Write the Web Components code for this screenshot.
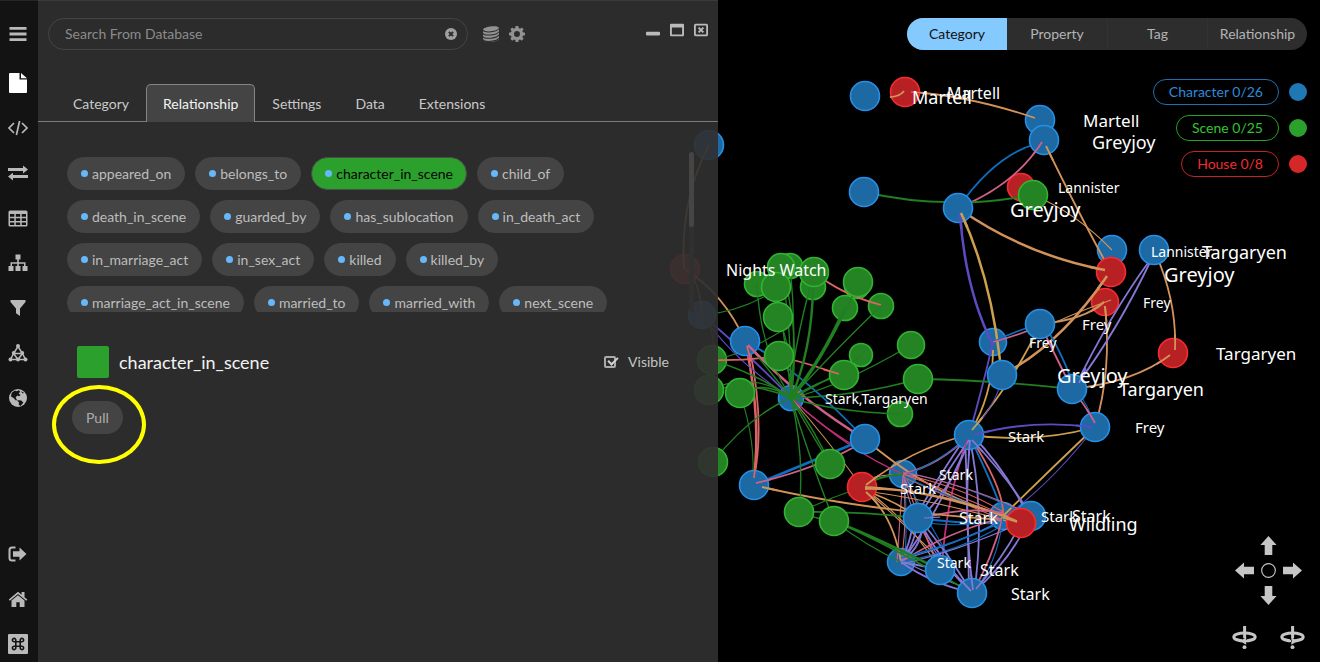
<!DOCTYPE html>
<html lang="en">
<head>
<meta charset="utf-8">
<title>Graph explorer</title>
<style>
html,body{margin:0;background:#000}
body{font:14px/20px Lato,"Noto Sans",sans-serif;color:#c4c4c4}
</style>
</head>
<body>
<graph-app></graph-app>
<script>
function define(name, css, html, setup) {
  const t = document.createElement('template');
  t.innerHTML = '<style>*{box-sizing:border-box}button{font:inherit;color:inherit;background:none;border:0;padding:0;margin:0;cursor:pointer}' + css + '</style>' + html;
  customElements.define(name, class extends HTMLElement {
    constructor() {
      super();
      this.attachShadow({mode: 'open'}).appendChild(t.content.cloneNode(true));
    }
    connectedCallback() { if (setup) setup(this, this.shadowRoot); }
  });
}

/* ---------- icons, all on a 20 x 20 grid ---------- */
const turn = d => `<ellipse cx="10" cy="9.500" rx="9.3" ry="3.5" fill="none" stroke="currentColor" stroke-width="2.6"/><path d="M8 11h4v4H8z" fill="#000"/><path d="M8.800 0h2.600v10.500H8.800z"/><path d="${d}"/><circle cx="10" cy="18.4" r="1.7"/>`;
const icons = {
  menu: '<path d="M1.500 3h17v2.800h-17zM1.500 8.600h17v2.800h-17zM1.500 14.200h17V17h-17z"/>',
  file: '<path d="M2 0h9.500v6.500H19V19a1 1 0 0 1-1 1H2a1 1 0 0 1-1-1V1a1 1 0 0 1 1-1zM13 0l6 5.200h-6z"/>',
  code: '<path d="M6 5L1 10l5 5M14 5l5 5-5 5M11.600 3L8.400 17" fill="none" stroke="currentColor" stroke-width="1.700"/>',
  swap: '<path d="M0 5h15V2.500L20 6.500l-5 4V8H0zM20 12H5V9.700L0 13.500l5 4V15h15z"/>',
  table: '<path fill-rule="evenodd" d="M2 2.500h16a1.500 1.500 0 0 1 1.500 1.500v13a1.500 1.500 0 0 1-1.500 1.500H2A1.500 1.500 0 0 1 .500 17V4A1.500 1.500 0 0 1 2 2.500zM2 6v2.800h4.300V6zm5.800 0v2.800h4.400V6zm5.900 0v2.800H18V6zM2 10.200V13h4.300v-2.800zm5.800 0V13h4.400v-2.800zm5.900 0V13H18v-2.800zM2 14.400V17h4.300v-2.600zm5.800 0V17h4.400v-2.600zm5.900 0V17H18v-2.600z"/>',
  tree: '<path d="M7.500 1.500h5v5h-1.700v2.700h6.700V13H19.500v5h-5v-5h1.500v-2.300h-5.200V13h1.700v5h-5v-5h1.700v-2.300H4V13h1.500v5h-5v-5h2V9.200h6.700V6.500H7.500z"/>',
  filter: '<path d="M2.500 2h15v2L12 10.500V18l-4-2.800v-4.700L2.500 4z"/>',
  network: '<path d="M10 3.500L5.500 10.500 2.500 16.500H17.500L14.500 10.500zM5.500 10.500h9M5.500 10.500L10 16.500l4.500-6" fill="none" stroke="currentColor" stroke-width="1.500"/><circle cx="10" cy="3" r="2"/><circle cx="5.700" cy="10" r="1.900"/><circle cx="14.300" cy="10" r="1.900"/><circle cx="2.500" cy="16.500" r="2"/><circle cx="10" cy="16.500" r="1.900"/><circle cx="17.500" cy="16.500" r="2"/>',
  globe: '<circle cx="10" cy="10" r="9"/><path fill="#131313" d="M4 4.500l3-2 1.500.8 2.200-1 1.600 1.400-1.700 1.800 2 1.500-1.500 1.200-2-.6-1.500 2.200 1.500 2.300-1.200.5L5.500 10 3 8.500 3.400 6zM13 3.200l3 1.600-1.500.8zM8.800 12l4.400.6 2.200 1.800-1.600 2-1.300 1.600-1.800-1.500.3-2z"/>',
  exit: '<path d="M7.500 3.500H4A2.500 2.500 0 0 0 1.500 6v8A2.500 2.500 0 0 0 4 16.500h3.500" fill="none" stroke="currentColor" stroke-width="2"/><path d="M5 7.300h6.500V3.500L18.500 10l-7 6.500v-3.800H5z"/>',
  home: '<path d="M.800 10.600L10 2.700l3.600 3V3h2.900v5.200l2.800 2.400-1 1.200L10 4.900l-8.200 6.900z"/><path d="M3.500 11.600L10 6.200l6.500 5.400V18h-4.800v-4.800H8.300V18H3.500z"/>',
  command: '<rect width="20" height="20" rx="1"/><path d="M7.800 7.800h4.400v4.400h-4.400zM7.800 7.800V6.200a1.700 1.700 0 1 0-1.700 1.600h1.700zM12.200 7.800V6.200a1.700 1.700 0 1 1 1.700 1.600h-1.700zM7.800 12.200v1.600a1.700 1.700 0 1 1-1.700-1.600h1.700zM12.200 12.200v1.600a1.700 1.700 0 1 0 1.700-1.600h-1.700z" fill="none" stroke="#131313" stroke-width="1.600"/>',
  clear: '<circle cx="10" cy="10" r="10"/><path d="M6.500 6.500l7 7M13.500 6.500l-7 7" stroke="#2c2c2c" stroke-width="3.400"/>',
  database: '<path d="M0 4.500C0 .500 20-1.500 20 2.500v13.500c0 4.500-20 5.500-20 1z"/><path d="M0 5c2 4 18 2.500 20-2M0 9c2 4 18 2.500 20-2M0 13c2 4 18 2.500 20-2M0 17c2 4 18 2.500 20-2" fill="none" stroke="#2c2c2c" stroke-width="1.300"/>',
  gear: '<path fill-rule="evenodd" d="M8.300 0h3.400l.5 2.600 1.600.7L16 1.800 18.300 4.100 16.700 6.300l.7 1.600 2.600.5v3.300l-2.600.5-.7 1.600 1.600 2.200-2.400 2.400-2.100-1.600-1.600.7-.5 2.500H8.300l-.5-2.500-1.600-.7L4 18.400 1.700 16l1.500-2.200-.7-1.600-2.500-.5V8.400l2.500-.5.7-1.600-1.500-2.200L4 1.800l2.200 1.500 1.600-.7zM10 6.300a3.700 3.700 0 1 0 0 7.400 3.700 3.700 0 0 0 0-7.400z"/>',
  minimize: '<rect y="12.500" width="20" height="5.500" rx="1.500"/>',
  maximize: '<path fill-rule="evenodd" d="M1.500 1h17A1.500 1.500 0 0 1 20 2.500v15a1.500 1.500 0 0 1-1.500 1.500h-17A1.500 1.500 0 0 1 0 17.500v-15A1.500 1.500 0 0 1 1.500 1zm1.200 5.500v9.800h14.600V6.500z"/>',
  close: '<rect x="1.300" y="2.300" width="17.400" height="15.400" rx="1" fill="none" stroke="currentColor" stroke-width="2.600"/><path d="M6.600 6.600l6.800 6.800M13.400 6.600l-6.800 6.800" stroke="currentColor" stroke-width="2.800"/>',
  up: '<path d="M10 0l8.500 9.500h-4.500V20H6V9.500H1.500z"/>',
  down: '<path d="M10 20l8.500-9.500h-4.500V0H6v10.500H1.500z"/>',
  left: '<path d="M0 10l9.500 8.500v-4.500H20V6H9.500V1.500z"/>',
  right: '<path d="M20 10l-9.500 8.500v-4.500H0V6h10.500V1.500z"/>',
  center: '<circle cx="10" cy="10" r="7.200" fill="none" stroke="currentColor" stroke-width="1.200"/>',
  turnleft: turn('M6 13l5.500-3.300v6.600zM11 12.200h3v1.800h-3z'),
  turnright: turn('M14.500 13L9 9.700v6.600zM6.500 12.200h3v1.800h-3z')
};
define('ui-icon', ':host{display:block;width:var(--size,20px);height:var(--size,20px)}svg{display:block;width:100%;height:100%;fill:currentColor;overflow:visible}',
  '<svg viewBox="0 0 20 20" aria-hidden="true"></svg>',
  (el, root) => { root.querySelector('svg').innerHTML = icons[el.getAttribute('name')]; });

/* ---------- side rail ---------- */
const railButton = (n, l) => `<button aria-label="${l}" class="${n}"><ui-icon name="${n}"></ui-icon></button>`;
define('icon-rail', `
:host{display:block;background:#131313;color:#b9b9b9;border-top:1px solid #262626}
nav{display:flex;flex-direction:column;gap:9px;height:100%;padding-top:15px}
button{display:grid;place-items:center;height:36px;width:36px}
.menu{margin-bottom:4px}.file{color:#fff}.exit{margin-top:auto}`,
  '<nav>' + [['menu','Menu'],['file','Document'],['code','Code'],['swap','Exchange'],['table','Table'],['tree','Hierarchy'],['filter','Filter'],['network','Network'],['globe','World'],['exit','Sign out'],['home','Home'],['command','Shortcuts']].map(a => railButton(...a)).join('') + '</nav>');

/* ---------- search row ---------- */
define('search-row', `
:host{display:flex;align-items:center;padding:0 10px}
.box{display:flex;align-items:center;flex:0 1 420px;height:32px;border:1px solid #444;border-radius:16px;padding:0 10px 0 16px}
input{flex:1;min-width:0;background:none;border:0;padding:0;outline:0;font:inherit;color:#ccc}
input::placeholder{color:#8b8b8b}
.box button{--size:12px;color:#a0a0a0}
.tools{display:flex;gap:10px;margin-left:15px;color:#929292;--size:16px}
.win{display:flex;gap:10px;margin-left:auto;margin-bottom:8px;color:#bababa;--size:14px}`,
  `<div class="box"><input type="text" placeholder="Search From Database" aria-label="Search From Database"><button aria-label="Clear"><ui-icon name="clear"></ui-icon></button></div>
<div class="tools"><button aria-label="Database"><ui-icon name="database"></ui-icon></button><button aria-label="Options"><ui-icon name="gear"></ui-icon></button></div>
<div class="win"><button aria-label="Minimize"><ui-icon name="minimize"></ui-icon></button><button aria-label="Maximize"><ui-icon name="maximize"></ui-icon></button><button aria-label="Close"><ui-icon name="close"></ui-icon></button></div>`);

/* ---------- tabs ---------- */
define('panel-tabs', `
:host{display:flex;padding:0 18px;background:linear-gradient(#7b7b7b,#7b7b7b) bottom/100% 1px no-repeat}
`, '<slot></slot>');
define('panel-tab', `
:host{display:block}
button{height:38px;padding:1px 16px 0;border:1px solid transparent;border-bottom:0;border-radius:5px 5px 0 0;color:#c9c9c9}
:host([active]) button{background:#444;border-color:#858585;color:#f4f4f4}`,
  '<button role="tab"><slot></slot></button>');

/* ---------- relationship pills ---------- */
define('relation-pill', `
:host{display:block}
button{display:flex;align-items:center;gap:4px;height:33px;padding:0 13px;border:1px solid #444;border-radius:17px;background:#444;color:#bdbdbd}
i{width:7px;height:7px;border-radius:50%;background:#66b8fa}
:host([active]) button{background:#2ca02c;color:#050505;border-color:#4b4b4b}`,
  '<button><i></i><span><slot></slot></span></button>');
define('relation-list', `
:host{display:grid;grid-template-columns:1fr 5px;height:160px;padding:0 24px 0 29px}
.list{display:flex;flex-wrap:wrap;align-content:flex-start;gap:10px;overflow:hidden;padding:5px 9px 0 0}
.track{background:#303030;border-radius:3px}
.thumb{height:75px;border-radius:3px;background:#454545}`,
  '<div class="list"><slot></slot></div><div class="track"><div class="thumb"></div></div>');

/* ---------- details of the chosen relationship ---------- */
define('relation-detail', `
:host{display:block;padding:34px 49px 0 34px}
header{display:flex;align-items:center;gap:10px;padding-left:5px}
.swatch{width:32px;height:32px;border-radius:2px;background:#2ca02c}
h2{margin:0;font:18px/24px Lato,sans-serif;color:#f2f2f2}
label{display:flex;align-items:center;gap:12px;margin-left:auto}
input{appearance:none;margin:0;width:12px;height:12px;position:relative}
input:checked::before{content:"";position:absolute;inset:0;box-sizing:border-box;border:2px solid #aaa;border-radius:2px}
input:checked::after{content:"";position:absolute;left:4px;top:1px;width:8px;height:4px;border:solid #d0d0d0;border-width:0 0 2px 2px;transform:rotate(-45deg)}
.action{position:relative;width:max-content;margin-top:23px}
.action button{height:33px;padding:0 14px;border-radius:17px;background:#444;color:#adadad}
.ring{position:absolute;inset:-16px -23px -30px -20px;border:4px solid #ff0;border-radius:50%;pointer-events:none}`,
  `<header><span class="swatch"></span><h2>character_in_scene</h2><label for="vis"><input type="checkbox" id="vis" checked>Visible</label></header>
<div class="action"><button>Pull</button><span class="ring"></span></div>`);

define('side-panel', `
:host{display:block;background:rgba(48,48,48,.92);border-top:1px solid #3a3a3a;padding-top:17px}
panel-tabs{margin-top:34px;margin-bottom:30px}`,
  `<search-row></search-row>
<panel-tabs>${['Category','Relationship','Settings','Data','Extensions'].map((t, i) => `<panel-tab${i == 1 ? ' active' : ''}>${t}</panel-tab>`).join('')}</panel-tabs>
<relation-list>${['appeared_on','belongs_to','character_in_scene','child_of','death_in_scene','guarded_by','has_sublocation','in_death_act','in_marriage_act','in_sex_act','killed','killed_by','marriage_act_in_scene','married_to','married_with','next_scene'].map((t, i) => `<relation-pill${i == 2 ? ' active' : ''}>${t}</relation-pill>`).join('')}</relation-list>
<relation-detail></relation-detail>`);

/* ---------- controls over the graph ---------- */
define('view-switch', `
:host{display:grid;grid-template-columns:repeat(4,1fr);width:400px;max-width:100%;height:32px;border-radius:16px;overflow:hidden;background:#2d2d2d}
button{color:#b4b4b4}
button+button+button{border-left:1px solid #323232}
.on{background:#85caff;color:#111}`,
  '<button class="on">Category</button><button>Property</button><button>Tag</button><button>Relationship</button>');
define('legend-item', `
:host{display:flex;align-items:center;gap:10px}
button{height:26px;padding:0 15px;border:1px solid var(--line);border-radius:13px;color:var(--tone)}
i{width:18px;height:18px;border-radius:50%;background:var(--dot)}`,
  '<button><slot></slot></button><i></i>');
const padButton = (n, l) => n ? `<button aria-label="${l}"><ui-icon name="${n}"></ui-icon></button>` : '<span></span>';
define('nav-pad', `
:host{display:block;width:72px;color:#c6c6c6}
.pad{display:grid;grid-template-columns:repeat(3,24px);grid-auto-rows:25px;margin-bottom:17px;--size:19px}
.turns{display:flex;justify-content:space-between;--size:23px}
button{display:grid;place-items:center;min-width:24px;min-height:24px}`,
  '<div class="pad">' + [[],['up','Up'],[],['left','Left'],['center','Center'],['right','Right'],[],['down','Down'],[]].map(a => padButton(...a)).join('') + '</div><div class="turns">' + padButton('turnleft','Turn left') + padButton('turnright','Turn right') + '</div>');
define('graph-overlay', `
:host{display:flex;flex-direction:column;align-items:flex-end;padding:18px 13px 13px}
.legend{display:flex;flex-direction:column;align-items:flex-end;gap:10px;margin-top:29px}
nav-pad{margin:auto 2px 0 0}`,
  `<view-switch></view-switch><div class="legend">
<legend-item style="--tone:#2f8bd8;--line:#1f70b0;--dot:#1f77b4">Character 0/26</legend-item>
<legend-item style="--tone:#35c435;--line:#27a027;--dot:#2ca02c">Scene 0/25</legend-item>
<legend-item style="--tone:#ef2d2d;--line:#c42424;--dot:#d62728">House 0/8</legend-item></div><nav-pad></nav-pad>`);

/* ---------- graph ---------- */
const paint = {b: ['#1c69a3','#2590e6'], g: ['#248424','#30b430'], r: ['#b82124','#fa2b30']};
const ink = {o:'#d2935a', y:'#cda04e', g:'#217f22', b:'#0d6fc0', p:'#5d4bc4', l:'#8578d6', k:'#cf6088', m:'#c02f78', s:'#dd6464'};
/* nodes below the edges, then nodes above them: kind, x, y, radius */
const back = `b702,315,14 b791,398,13 b993,342,14 b903,474,14 b1003,516,14 r1021,187,14 g790,266,13 g757,284,13 g813,287,13 g857,286,13 g845,308,13 g861,355,12 g881,306,13 r1105,302,14 g900,414,13 b1112,250,15 b901,562,14 b709,145,15 r685,269,15 g712,360,15 b1040,120,15`;
const front = `b865,96,15 b864,192,15 r905,92,15 b1044,140,15 b958,208,15 g1033,195,15 g781,267,14 g776,287,15 g814,272,15 g858,282,15 g778,317,15 g779,356,15 g911,345,14 g918,379,15 g844,375,15 g709,390,15 g740,393,15 g713,462,15 g830,464,15 g799,512,15 g834,521,15 b745,341,15 b865,439,15 b754,485,15 r1111,272,15 b1154,250,15 b1040,324,15 b1002,375,15 b1072,389,15 r1173,353,15 b1095,427,15 b969,435,15 b918,518,15 b940,570,15 b972,593,15 b1031,516,15 r1021,523,15 r862,487,15`;
/* edges: ink, width, start, control, end */
const under = `
o2 911,92 970,96 1035,118|b2 958,208 995,155 1036,144|k2 958,208 1015,185 1042,142|g2 864,192 912,203 958,202|g2 958,203 995,202 1033,195|o2 1046,146 1082,220 1111,272|o1 1033,195 1075,212 1112,250|o3 958,208 1025,255 1105,270|p3 960,213 965,290 993,345|y3 961,213 990,275 1000,360
o2 1154,250 1177,300 1175,350|o2 1170,355 1135,382 1072,389|o3 1107,276 1060,345 1002,375|o2 1104,302 1085,320 1040,324|o1 1111,300 1085,309 1056,322|o2 1105,306 1112,370 1095,427
b2 1040,324 1012,332 993,342|k2 1040,326 1016,336 993,342|k2 1040,324 1060,365 1072,389|b2 1044,324 1066,360 1074,389|l2 1150,260 1110,315 1074,389|l2 1153,256 1118,330 1076,386|k2 1072,389 1085,405 1095,423|b1 1076,389 1090,408 1095,427
y2 1040,324 1015,380 972,430|p1 1002,375 1000,400 969,435|p2 993,342 982,390 969,435|y2 993,350 993,395 969,435|p2 974,435 1030,419 1092,427|y2 969,435 1035,444 1095,427|y2 1095,427 1050,470 1003,516|p1 1095,427 1050,485 1003,518|g2 918,379 990,380 1072,389
o2 865,439 935,500 1021,520|o2 967,435 910,450 866,485|k2 969,435 940,465 903,474|b1 969,435 943,461 903,476|m2 969,435 945,500 942,570|m1 791,398 850,452 903,474
l2 969,440 945,475 918,518|l2 967,435 936,480 915,518|l2 971,435 952,490 918,520|l2 969,440 935,520 901,562|l2 965,435 968,515 969,593|l2 970,440 963,515 973,590|l2 969,435 986,515 974,593|l2 972,440 1010,480 1031,516|l2 972,435 1006,470 1028,516|b2 969,435 1000,500 1003,516|s2 969,435 1005,490 1003,516
s1 903,474 960,495 1021,523|s1 903,474 965,488 1003,512|s1 903,477 960,502 1003,520|b1 903,472 960,482 1031,516|b1 903,476 950,498 1003,516|k1 903,472 970,486 1021,510|s1 903,474 908,520 901,562|k1 903,474 900,520 897,562|b1 903,474 908,500 905,562|s1 903,474 918,495 918,518|l1 903,474 914,540 972,593|b1 903,474 940,545 972,593|s1 903,474 930,550 940,570
o2 865,489 935,488 1017,521|o2 865,487 930,490 1003,516|o1 865,491 935,500 1021,525|o2 862,490 895,500 918,518|o1 862,487 910,520 940,570|o1 862,487 918,535 972,593|o2 866,492 893,515 901,562|o1 862,480 885,474 903,474|g2 903,474 880,475 862,487
b2 918,518 965,525 1021,523|k2 924,518 965,506 1003,513|o2 762,487 860,510 1003,520|b1 918,522 970,529 1003,518|l2 918,518 915,545 901,562|l2 922,518 925,545 901,562|l2 914,518 910,545 901,562|l2 918,518 936,555 972,593|l2 918,518 945,548 972,593|k1 918,518 935,555 940,570
b1 901,562 960,551 1003,525|l1 901,560 955,545 1003,520|k2 904,560 950,531 1003,518|l1 901,564 955,552 1021,523|b2 901,558 960,543 1003,521|l2 901,562 935,568 940,570|l2 901,562 930,583 972,593|l1 905,562 935,577 972,590|g2 834,521 880,540 972,593|g1 834,521 865,545 901,562|g3 834,521 880,539 940,570
l2 976,589 1005,555 1021,523|l2 972,593 1010,562 1031,516|k2 972,593 992,560 1003,516|b1 972,593 998,565 1003,516
s3 754,478 761,420 747,350|s2 754,478 765,425 750,350|g1 752,485 757,445 740,393|b3 754,485 815,460 865,439|k2 756,483 820,468 865,441|b2 745,341 800,370 865,439|k3 748,345 800,400 865,439|m1 791,398 825,430 865,452|o1 791,398 825,436 862,487|p2 702,315 750,355 791,398|p1 702,315 735,362 791,398|o2 685,269 725,295 745,341|o1 685,269 700,280 702,315|o2 709,145 680,200 684,269
s2 712,360 745,361 779,356|s2 779,356 810,364 839,374|s2 814,272 840,294 881,305|g1 702,315 740,312 776,290|g1 702,315 717,330 712,360|g1 712,360 745,355 791,325|g1 799,512 830,498 862,487|g2 799,512 860,511 918,518|g1 799,512 815,519 834,521|g1 834,521 820,520 799,512`;
/* hub spokes: width, control, end */
const spokes = `1 792,330 781,267|1 797,330 790,266|1 760,350 757,284|1 787,350 776,287|2 812,350 813,287|3 822,360 845,308|1 837,338 858,282|1 840,345 881,306|1 793,350 778,317|1 793,370 779,356|1 840,387 911,345|1 860,396 918,379|1 820,380 844,375|1 835,378 861,355|1 835,412 900,414|1 760,375 712,360|1 755,370 709,390|1 765,380 740,393|1 750,415 713,462|1 815,430 830,464|1 805,455 799,512|1 810,460 834,521|1 790,360 814,272|1 765,365 745,341|1 800,340 785,280|1 803,420 830,464|1 750,380 712,390`;
/* edges whose first stretch shows on top of their start node */
const over = `o2 904,91 899,98 884,97|o1 911,92 970,96 1035,118|k2 1042,142 1015,185 958,208|o2 1046,146 1082,220 1111,272|p3 960,213 965,290 993,345|y3 961,213 990,275 1000,360|o3 1105,270 1025,255 958,208|o3 1107,276 1060,345 1002,375|o2 1104,302 1085,320 1040,324|o2 1105,306 1112,370 1095,427|k3 748,345 800,400 865,439|s2 747,346 765,410 754,478|s2 754,478 761,420 747,350|k2 756,483 820,468 865,441|b2 750,344 800,370 865,439|o2 762,487 860,510 1003,520|o2 866,485 910,450 967,435|o2 865,489 935,488 1017,521|o2 865,487 930,490 1003,516|o2 866,492 893,515 901,562|o2 1017,521 935,488 865,489|o2 1017,522 935,496 865,487|p2 974,435 1030,419 1092,427|p2 1092,427 1030,419 974,435|k2 1095,423 1085,405 1072,389|o2 1175,350 1177,300 1154,250|o2 1170,355 1135,382 1072,389|l2 973,590 963,515 970,440|l2 971,591 936,555 918,518|l2 976,589 1005,555 1021,523|l2 1079,383 1110,315 1150,260|y2 972,430 1015,380 1040,324|l2 969,440 945,475 918,518|l2 970,440 963,515 973,590|l2 972,440 1010,480 1031,516|m1 967,440 950,490 942,570|l1 924,518 965,516 1003,513|s2 839,374 825,369 800,365`;
/* labels: x, baseline, size, text */
const labels = [[912,104,18,'Martell'],[947,99,16,'Martell'],[1083,127,17,'Martell'],[1092,149,18,'Greyjoy'],[1058,193,14,'Lannister'],[1010,217,20,'Greyjoy'],[1151,257,14,'Lannister'],[1202,259,18,'Targaryen'],[1164,282,20,'Greyjoy'],[1143,308,14,'Frey'],[1082,330,15,'Frey'],[1029,348,14,'Frey'],[1057,383,20,'Greyjoy'],[1119,396,18,'Targaryen'],[1216,360,17,'Targaryen'],[1135,433,15,'Frey'],[1008,442,15,'Stark'],[939,480,14,'Stark'],[900,494,15,'Stark'],[959,524,16,'Stark'],[1041,522,15,'Stark'],[1072,522,16,'Stark'],[1069,531,18,'Wildling'],[937,568,14,'Stark'],[980,576,16,'Stark'],[1011,600,16,'Stark'],[726,276,16,'Nights Watch'],[825,404,14,'Stark,Targaryen']];
const nodeSvg = s => s.split(' ').map(n => {
  const [x, y, r] = n.slice(1).split(','), [f, k] = paint[n[0]];
  return `<circle cx="${x}" cy="${y}" r="${r - .5}" fill="${f}" stroke="${k}" stroke-width="1.6"/>`;
}).join('');
const edgeSvg = (s, dash = '') => s.trim().split(/[|\n]/).map(e => {
  const [k, a, c, z] = e.split(' ');
  return `<path d="M${a}Q${c} ${z}" stroke="${ink[k[0]]}" stroke-width="${+k[1] * .7 + .4}"${dash}/>`;
}).join('');
const spokeSvg = spokes.split('|').map(e => {
  const [w, c, z] = e.split(' ');
  return `<path d="M791,398Q${c} ${z}" stroke="${ink.g}" stroke-width="${+w + .4}"/>`;
}).join('');
define('graph-canvas', ':host{display:block}svg{display:block;width:100%;height:100%}.edges{fill:none}text{font-family:"Noto Sans",sans-serif;fill:#fff}',
  `<svg viewBox="0 0 1320 662" preserveAspectRatio="xMidYMin slice" role="img" aria-label="Relationship graph">${nodeSvg(back)}<g class="edges">${edgeSvg(under)}${spokeSvg}</g>${nodeSvg(front)}<g class="edges">${edgeSvg(over, ' stroke-dasharray="16 2000"')}</g>${labels.map(([x, y, s, t]) => `<text x="${x}" y="${y}" font-size="${s}">${t}</text>`).join('')}</svg>`);

define('graph-app', `
:host{display:grid;grid-template-columns:38px minmax(0,35fr) minmax(0,31fr);min-height:100vh;position:relative;overflow:hidden}
graph-canvas{position:absolute;inset:0}
icon-rail,side-panel,graph-overlay{position:relative}`,
  '<graph-canvas></graph-canvas><icon-rail></icon-rail><side-panel></side-panel><graph-overlay></graph-overlay>');
</script>
</body>
</html>
